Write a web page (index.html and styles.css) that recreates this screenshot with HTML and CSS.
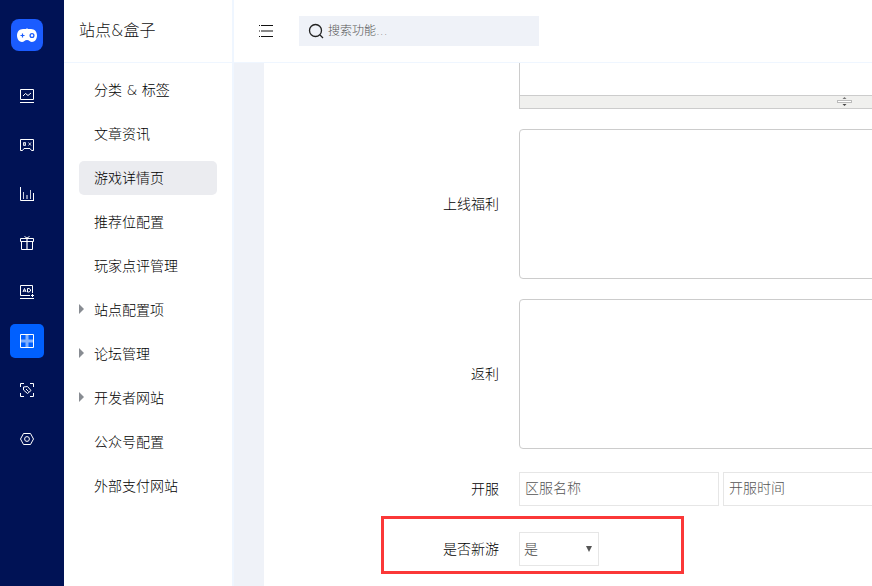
FILE: index.html
```html
<!DOCTYPE html>
<html lang="zh-CN">
<head>
  <meta charset="UTF-8" />
  <meta name="viewport" content="width=device-width, initial-scale=1.0" />
  <title>站点&amp;盒子 - 游戏详情页</title>
  <link rel="stylesheet" href="styles.css">
</head>
<body>
  <!-- Icon rail -->
  <nav class="rail" aria-label="主导航">
    <a class="logo" href="#" aria-label="首页">
      <svg width="32" height="32" viewBox="0 0 32 32">
        <path d="M16 9v2" stroke="#9dbcff" stroke-width="1.4" />
        <path d="M12 10h8c3.600 0 6 2.800 6 6.500S23.600 23 21 23c-2 0-2.800-2-5-2s-3 2-5 2c-2.600 0-5-2.800-5-6.500S8.400 10 12 10z" fill="#fff" />
        <path d="M9.500 16.500h4M11.500 14.500v4" stroke="#1b5cff" stroke-width="1.200" />
        <circle cx="21" cy="16.500" r="1.900" fill="none" stroke="#1b5cff" stroke-width="1.300" />
      </svg>
    </a>
    <a class="rail-item" href="#" aria-label="概览">
      <svg width="16" height="16" viewBox="0 0 16 16">
        <path d="M1.500 1.500h13v10h-13zM1 14.500h14" />
        <path d="M4 8l2.500-2.500 2.500 2L12 5" />
      </svg>
    </a>
    <a class="rail-item" href="#" aria-label="游戏">
      <svg width="16" height="16" viewBox="0 0 16 16">
        <path d="M1.500 2.500h13v11h-2l-1.500-2H5l-1.500 2h-2z" />
        <path d="M4 7h3M9.500 5.500l2.500 3M12 5.500l-2.500 3" opacity=".8" />
        <path d="M4.500 5.500h2v3h-2z" opacity=".8" />
      </svg>
    </a>
    <a class="rail-item" href="#" aria-label="数据">
      <svg width="16" height="16" viewBox="0 0 16 16">
        <path d="M1.500 1v13.500H15M14.500 14V7" />
        <path d="M4.500 13V6M11.500 13V4" opacity=".8" />
        <path d="M8 13V9" stroke-width="2" opacity=".5" />
      </svg>
    </a>
    <a class="rail-item" href="#" aria-label="礼包">
      <svg width="16" height="16" viewBox="0 0 16 16">
        <path d="M1.500 3.500h13v3h-13zM2.500 6.500h11v8h-11z" />
        <path d="M5.500 1.500L8 3l2.500-1.500" />
        <path d="M8 3v11" stroke-width="2" opacity=".6" />
      </svg>
    </a>
    <a class="rail-item" href="#" aria-label="广告">
      <svg width="16" height="16" viewBox="0 0 16 16">
        <path d="M13.500 9V1.500h-12v10H11M1 14.500h14M12 11.500h3M13.500 10v3" />
        <path d="M4 8l1.500-3.500L7 8M4.500 7h2M8.500 4.500h1.500l1.500 1v1.500l-1.500 1H8.500z" />
      </svg>
    </a>
    <a class="rail-item active" href="#" aria-label="站点与盒子" aria-current="page">
      <svg width="16" height="16" viewBox="0 0 16 16">
        <path d="M1.500 1.500h13v13h-13z" />
        <path d="M8 2v12M2 8h12" stroke-width="3" opacity=".5" />
      </svg>
    </a>
    <a class="rail-item" href="#" aria-label="标签">
      <svg width="16" height="16" viewBox="0 0 16 16">
        <path d="M1.500 5V1.500H5M11 1.500h3.500V5M14.500 11v3.500H11M5 14.500H1.500V11" />
        <path d="M4.500 5l4-.5 3.500 4-3.500 3-4-3.500z" />
        <path d="M7 7l2.500 2.500" />
      </svg>
    </a>
    <a class="rail-item" href="#" aria-label="设置">
      <svg width="16" height="16" viewBox="0 0 16 16">
        <path d="M4.500 2.500h7l3 5.500-3 5.500h-7l-3-5.500z" />
        <circle cx="8" cy="8" r="2.400" />
      </svg>
    </a>
  </nav>

  <!-- Section menu -->
  <aside class="sidebar">
    <h1 class="sidebar-title">站点&amp;盒子</h1>
    <nav class="menu" aria-label="站点菜单">
      <a class="menu-item" href="#">分类 &amp; 标签</a>
      <a class="menu-item" href="#">文章资讯</a>
      <a class="menu-item active" href="#" aria-current="page">游戏详情页</a>
      <a class="menu-item" href="#">推荐位配置</a>
      <a class="menu-item" href="#">玩家点评管理</a>
      <a class="menu-item has-children" href="#">站点配置项</a>
      <a class="menu-item has-children" href="#">论坛管理</a>
      <a class="menu-item has-children" href="#">开发者网站</a>
      <a class="menu-item" href="#">公众号配置</a>
      <a class="menu-item" href="#">外部支付网站</a>
    </nav>
  </aside>

  <div class="page">
    <header class="topbar">
      <button class="toggle" type="button" aria-label="收起菜单">
        <svg width="16" height="14" viewBox="0 0 16 14">
          <path d="M1 1.500h1M3 1.500h12M1 12.500h1M3 12.500h12" stroke="#111" />
          <path d="M1 7h1M3 7h12" stroke="#888" stroke-width="2" />
        </svg>
      </button>
      <label class="search">
        <svg width="16" height="16" viewBox="0 0 16 16">
          <circle cx="7.500" cy="7.500" r="6" />
          <path d="M12 12l3 3" />
        </svg>
        <input type="text" placeholder="搜索功能..." aria-label="搜索功能" />
      </label>
    </header>

    <main class="content">
      <form class="form">
        <div class="row">
          <span class="label"></span>
          <div class="field editor">
            <textarea class="editor-body" aria-label="内容"></textarea>
            <div class="editor-grip">
              <svg width="16" height="10" viewBox="0 0 16 10">
                <path d="M7.500 0l2 2h-4z" fill="#777" />
                <rect x=".5" y="3.500" width="14" height="2" fill="#fff" stroke="#bbb" />
                <path d="M5.500 7h4l-2 2z" fill="#444" />
              </svg>
            </div>
          </div>
        </div>
        <div class="row">
          <label class="label" for="benefits">上线福利</label>
          <textarea class="field" id="benefits"></textarea>
        </div>
        <div class="row">
          <label class="label" for="rebate">返利</label>
          <textarea class="field" id="rebate"></textarea>
        </div>
        <div class="row short">
          <label class="label" for="serverName">开服</label>
          <div class="field inputs">
            <input type="text" id="serverName" placeholder="区服名称" />
            <input type="text" placeholder="开服时间" aria-label="开服时间" />
          </div>
        </div>
        <div class="row short marked">
          <label class="label" for="isNew">是否新游</label>
          <div class="select">
            <select id="isNew">
              <option>是</option>
              <option>否</option>
            </select>
          </div>
        </div>
      </form>
    </main>
  </div>
</body>
</html>
```
FILE: styles.css
```css
*,
*::before,
*::after {
  box-sizing: border-box;
}

body {
  margin: 0;
  height: 100vh;
  display: flex;
  overflow: hidden;
  font-family: "DejaVu Sans Light", "Noto Sans", "Noto Sans CJK SC", sans-serif;
  font-size: 14px;
  font-weight: 300;
  color: #000;
  background: #fff;
}

a {
  color: inherit;
  text-decoration: none;
}

input,
select,
textarea {
  font: inherit;
  color: #444;
  background: #fff;
  border: 1px solid #e6e6e6;
  border-radius: 0;
  outline: none;
}

input::placeholder {
  color: #555;
}

svg {
  display: block;
  fill: none;
}

/* Icon rail */
.rail {
  flex: 0 0 64px;
  display: flex;
  flex-direction: column;
  gap: 15px;
  padding: 19px 10px;
  background: #001255;
}

.logo {
  width: 32px;
  height: 32px;
  margin: 0 1px 13px;
  border-radius: 8px;
  background: #1b5cff;
}

.rail-item {
  width: 34px;
  height: 34px;
  display: flex;
  align-items: center;
  justify-content: center;
  border-radius: 5px;
}

.rail-item svg {
  stroke: #fff;
}

.rail-item.active {
  background: #0060ff;
}

/* Section menu */
.sidebar {
  flex: 0 0 170px;
  border-right: 2px solid #eff6ff;
}

.sidebar-title {
  height: 63px;
  margin: 0;
  padding-left: 15px;
  border-bottom: 1px solid #eff6ff;
  font-size: 16px;
  font-weight: 300;
  line-height: 62px;
  color: #111;
}

.menu {
  display: flex;
  flex-direction: column;
  gap: 10px;
  padding: 10px 15px;
}

.menu-item {
  position: relative;
  height: 34px;
  padding-left: 15px;
  border-radius: 5px;
  line-height: 34px;
}

.menu-item.active {
  background: #ebecf0;
}

.menu-item.has-children::before {
  content: "";
  position: absolute;
  left: 0;
  top: 11px;
  border: 5px solid transparent;
  border-left-color: #888c92;
  border-right: 0;
}

/* Top bar */
.page {
  flex: 1;
  min-width: 0;
  display: flex;
  flex-direction: column;
}

.topbar {
  flex: 0 0 63px;
  display: flex;
  align-items: center;
  gap: 25px;
  padding-left: 24px;
  border-bottom: 1px solid #eff6ff;
}

.toggle {
  padding: 0;
  border: 0;
  background: none;
  cursor: pointer;
}

.search {
  width: 240px;
  height: 30px;
  display: flex;
  align-items: center;
  gap: 4px;
  padding: 0 9px;
  background: #eff2f8;
}

.search svg {
  flex: none;
  stroke: #222;
  stroke-width: 1.3;
}

.search input {
  flex: 1;
  min-width: 0;
  padding: 0;
  border: 0;
  font-size: 12px;
  background: none;
}

/* Detail form */
.content {
  flex: 1;
  min-height: 0;
  padding-left: 30px;
  overflow: hidden;
  background: #eff2f8;
}

.form {
  min-height: 100%;
  display: flex;
  flex-direction: column;
  gap: 20px;
  background: #fff;
}

.row {
  display: flex;
  align-items: center;
  gap: 20px;
}

.row.short {
  height: 40px;
}

.label {
  flex: 0 0 235px;
  padding-bottom: 2px;
  text-align: right;
}

.field {
  flex: 0 0 652px;
}

textarea.field {
  height: 150px;
  border-color: #ccc;
  border-radius: 4px;
  resize: none;
}

.editor {
  border: 1px solid #ccc;
  border-top: 0;
}

.editor-body {
  display: block;
  width: 100%;
  height: 32px;
  border: 0;
  resize: none;
}

.editor-grip {
  display: flex;
  align-items: center;
  justify-content: center;
  height: 13px;
  border-top: 1px solid #ccc;
  background: #f0f0ee;
}

.inputs {
  display: flex;
  gap: 4px;
}

.inputs input {
  width: 200px;
  height: 34px;
  padding: 0 5px 2px;
}

.select {
  position: relative;
}

.select select {
  appearance: none;
  display: block;
  width: 80px;
  height: 34px;
  padding: 0 4px;
}

.select::after {
  content: "";
  position: absolute;
  right: 7px;
  top: 14px;
  border: 3px solid transparent;
  border-top: 6px solid #555;
  border-bottom: 0;
  pointer-events: none;
}

.marked {
  position: relative;
}

.marked::after {
  content: "";
  position: absolute;
  left: 117px;
  top: -13px;
  width: 303px;
  height: 58px;
  border: 3px solid #fb3838;
  pointer-events: none;
}
```
